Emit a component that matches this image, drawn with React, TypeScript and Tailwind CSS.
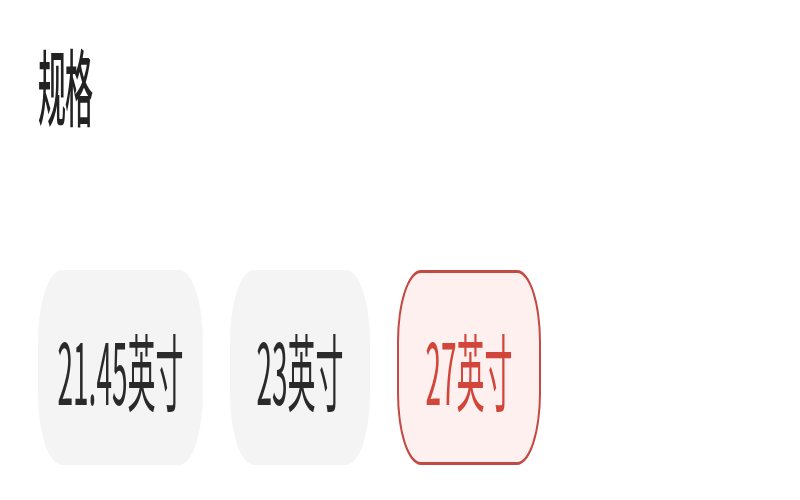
const SIZES = [
  { label: "21.45英寸", w: "w-[165px]" },
  { label: "23英寸", w: "w-[140px]" },
  { label: "27英寸", w: "w-[144px]" },
];

export default function App() {
  const selected = 2;

  return (
    <div className="w-[800px] h-[500px] overflow-hidden bg-white">
      {/* the reference is stretched vertically, so lay out at 1/3 height and scale */}
      <div
        className="h-[167px] origin-top-left scale-y-[3] px-[38px] pt-[14px] text-[#222]"
        style={{ fontFamily: '"Noto Sans CJK SC", "Noto Sans", sans-serif' }}
      >
        <h2 className="text-[28px] leading-none font-medium tracking-[-1px]">规格</h2>

        <div className="mt-[48px] flex items-center gap-[27px]">
          {SIZES.map((s, i) => (
            <button
              key={s.label}
              className={`${s.w} h-[65px] flex items-center justify-center rounded-[24px] text-[28px] leading-none border-x-2 border-y-[1.5px] ${
                i === selected
                  ? "bg-[#fdf0ee] border-[#c24a42] text-[#d2453b]"
                  : "bg-[#f4f4f4] border-transparent text-[#2a2a2a]"
              }`}
            >
              {s.label}
            </button>
          ))}
        </div>
      </div>
    </div>
  );
}
